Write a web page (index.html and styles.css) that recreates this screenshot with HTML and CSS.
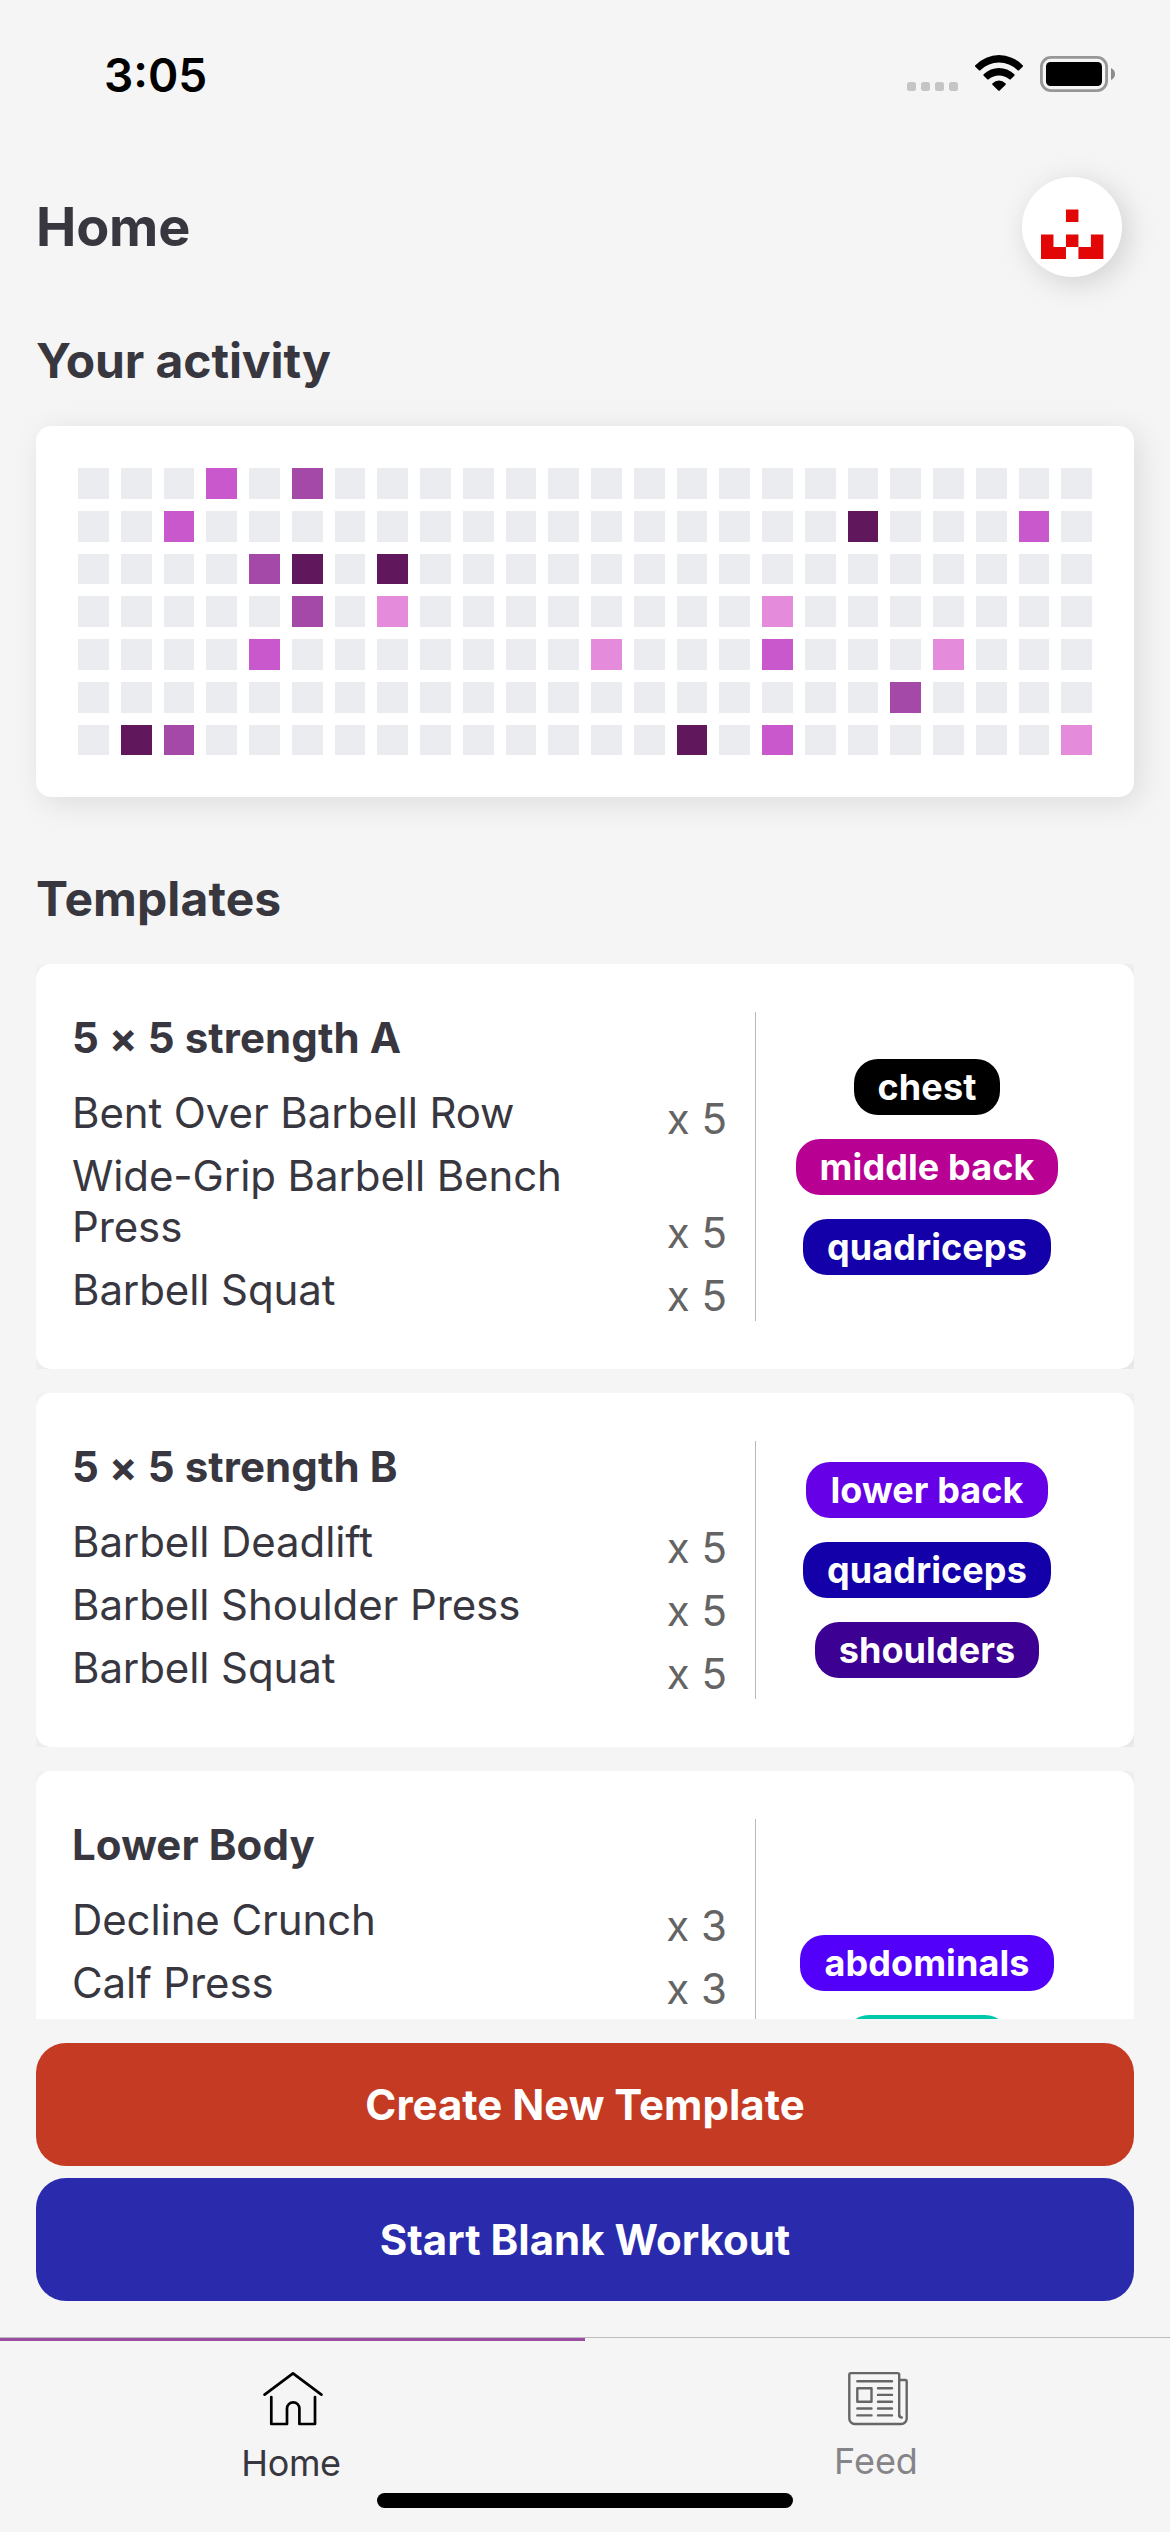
FILE: index.html
```html
<!DOCTYPE html>
<html lang="en">
<head>
<meta charset="utf-8">
<title>Home</title>
<link rel="stylesheet" href="styles.css">
</head>
<body>
<div class="status">
  <span class="time">3:05</span>
  <div class="status-icons">
    <div class="dots"><i></i><i></i><i></i><i></i></div>
    <svg class="wifi" width="48" height="36" viewBox="285 75 144 108">
      <path d="M287 105A97 97 0 0 1 427 105Q431 107 428 110L418 120Q415 123 412 120A79 79 0 0 0 302 120Q299 123 296 120L286 110Q283 107 287 105Z"/>
      <path d="M312 132A65 65 0 0 1 402 132Q406 134 403 137L393 147Q390 150 387 147A47 47 0 0 0 327 147Q324 150 321 147L311 137Q308 134 312 132Z"/>
      <path d="M338 160A26 26 0 0 1 376 160Q379 162 376 165L360 181Q357 184 354 181L338 165Q335 162 338 160Z"/>
    </svg>
    <svg class="battery" width="75" height="36" viewBox="0 0 75 36">
      <rect x="1.4" y="1.4" width="65.2" height="33.2" rx="9.5" fill="none" stroke="#969696" stroke-width="2.8"/>
      <rect x="6" y="6" width="56" height="24" rx="4.5"/>
      <path d="M71 12Q75 14 75 18T71 24Z" fill="#8c8c8c"/>
    </svg>
  </div>
</div>

<header class="header">
  <h1>Home</h1>
  <div class="avatar">
    <svg width="62.4" height="62.4" viewBox="0 0 5 5" fill="#e20606">
      <path d="M2 1h1v1H2zM0 3h1v1H0zM2 3h1v1H2zM4 3h1v1H4zM0 4h2v1H0zM3 4h2v1H3z"/>
    </svg>
  </div>
</header>

<h2>Your activity</h2>
<div class="activity" id="activity"></div>

<h2 class="templates-title">Templates</h2>
<main class="list">
  <div class="row">
    <article class="card">
      <div class="info">
        <h3>5 × 5 strength A</h3>
        <div class="exercise"><span class="name">Bent Over Barbell Row</span><span class="sets">x 5</span></div>
        <div class="exercise"><span class="name">Wide-Grip Barbell Bench Press</span><span class="sets">x 5</span></div>
        <div class="exercise"><span class="name">Barbell Squat</span><span class="sets">x 5</span></div>
      </div>
      <div class="tags">
        <span class="tag chest">chest</span>
        <span class="tag middle-back">middle back</span>
        <span class="tag quadriceps">quadriceps</span>
      </div>
    </article>
  </div>
  <div class="row">
    <article class="card">
      <div class="info">
        <h3>5 × 5 strength B</h3>
        <div class="exercise"><span class="name">Barbell Deadlift</span><span class="sets">x 5</span></div>
        <div class="exercise"><span class="name">Barbell Shoulder Press</span><span class="sets">x 5</span></div>
        <div class="exercise"><span class="name">Barbell Squat</span><span class="sets">x 5</span></div>
      </div>
      <div class="tags">
        <span class="tag lower-back">lower back</span>
        <span class="tag quadriceps">quadriceps</span>
        <span class="tag shoulders">shoulders</span>
      </div>
    </article>
  </div>
  <div class="row">
    <article class="card tall">
      <div class="info">
        <h3>Lower Body</h3>
        <div class="exercise"><span class="name">Decline Crunch</span><span class="sets">x 3</span></div>
        <div class="exercise"><span class="name">Calf Press</span><span class="sets">x 3</span></div>
      </div>
      <div class="tags">
        <span class="tag abdominals">abdominals</span>
        <span class="tag teal"></span>
      </div>
    </article>
  </div>
</main>

<div class="actions">
  <button class="btn create">Create New Template</button>
  <button class="btn start">Start Blank Workout</button>
</div>

<nav class="tabs">
  <a class="tab active">
    <svg width="60" height="56" viewBox="0 0 60 56" fill="none" stroke="#000" stroke-width="2.7" stroke-linecap="round" stroke-linejoin="round">
      <path d="M1.6 23.6L30 2.4L58.4 23.6"/>
      <path d="M8.3 26V53H24V37.500a6 6 0 0 1 12.400 0V53H52V26"/>
    </svg>
    <span>Home</span>
  </a>
  <a class="tab feed">
    <svg width="60" height="56" viewBox="0 0 60 56" fill="none" stroke="#666" stroke-width="2.400" stroke-linecap="round" stroke-linejoin="round">
      <path d="M52 45.500a1.700 1.700 0 0 1-.8-1.400V3.600a1.500 1.500 0 0 0-1.500-1.500H2.800a1.500 1.500 0 0 0-1.500 1.500V47.500a5.500 5.500 0 0 0 5.500 5.500H53.200a5.500 5.500 0 0 0 5.500-5.500V10.200a1.200 1.200 0 0 0-1.200-1.200H51.500"/>
      <path d="M51.200 44.500Q51.500 46.500 53.800 46.500"/>
      <path d="M9.300 10.300H44M30 17.200H44M30 23.900H44M30 30.800H44M30 37.500H44M30 44.400H44M9.300 37.500H23.500M9.300 44.400H23.500M9.300 17.200H23.500V30.800H9.300Z"/>
    </svg>
    <span>Feed</span>
  </a>
  <div class="home-indicator"></div>
</nav>
<script src="app.js"></script>
</body>
</html>
```
FILE: styles.css
```css
* { box-sizing: border-box; }
body {
  margin: 0;
  width: 1170px;
  height: 2532px;
  overflow: hidden;
  display: flex;
  flex-direction: column;
  background: #f5f5f5;
  color: #38373f;
  font-family: Inter, "Liberation Sans", sans-serif;
}
h1, h2, h3 { margin: 0; font-weight: 700; }
svg { display: block; }

.status {
  height: 141px;
  flex: none;
  padding: 0 55px 0 104px;
  display: flex;
  justify-content: space-between;
  align-items: flex-start;
  color: #000;
}
.time { margin-top: 46px; font-size: 46px; line-height: 58px; font-weight: 600; }
.status-icons { display: flex; align-items: flex-end; height: 36px; margin-top: 55px; }
.dots { display: flex; gap: 5px; }
.dots i { width: 9px; height: 9px; border-radius: 2.5px; background: #c5c5c5; }
.wifi { margin: 0 17px; }
.battery { margin-bottom: -1px; }

.header {
  flex: none;
  height: 100px;
  margin: 36px 48px 0 36px;
  display: flex;
  justify-content: space-between;
  align-items: center;
}
h1 { font-size: 54px; line-height: 66px; letter-spacing: -.2px; }
.avatar {
  width: 100px;
  height: 100px;
  border-radius: 50%;
  background: #fff;
  padding: 19.600px 0 0 19.300px;
  box-shadow: 6px 6px 30px rgba(0, 0, 0, .15);
}

h2 { flex: none; margin: 55px 36px 0; font-size: 48px; line-height: 58px; letter-spacing: -.1px; }
.templates-title { margin-top: 73px; letter-spacing: .1px; }

.activity {
  flex: none;
  height: 371px;
  margin: 36px 36px 0;
  padding: 42px;
  border-radius: 15px;
  background: #fff;
  box-shadow: 6px 6px 30px rgba(0, 0, 0, .1);
  display: grid;
  grid-template-columns: repeat(24, 30.75px);
  grid-auto-rows: 30.75px;
  gap: 12px;
}
.day { background: #ebecf0; }
.level-1 { background: #e48bdb; }
.level-2 { background: #c858cc; }
.level-3 { background: #a549a8; }
.level-4 { background: #61175c; }

.list {
  flex: none;
  height: 1055px;
  margin: 36px 36px 0;
  overflow: hidden;
  display: flex;
  flex-direction: column;
  gap: 24px;
}
.row { flex: none; overflow: hidden; }
.card {
  display: flex;
  padding: 48px 36px;
  border-radius: 15px;
  background: #fff;
  box-shadow: 6px 6px 30px rgba(0, 0, 0, .1);
}
.card.tall { height: 784px; }
.info {
  width: 684px;
  padding-right: 28px;
  border-right: 1px solid #b9b9b9;
  font-size: 42px;
  line-height: 51px;
}
h3 { margin-bottom: 18px; font-size: 42px; line-height: 51px; letter-spacing: .1px; }
.exercise { display: flex; justify-content: space-between; align-items: flex-end; }
.name { max-width: 540px; margin: 6px 0; letter-spacing: -.1px; }
.sets { color: #646464; }
.tags {
  flex: 1;
  display: flex;
  flex-direction: column;
  justify-content: center;
  align-items: center;
  gap: 24px;
}
.tall .tags { justify-content: flex-start; padding-top: 116px; }
.tag {
  height: 56px;
  padding: 6px 24px;
  border-radius: 24px;
  color: #fff;
  font-size: 36px;
  line-height: 44px;
  font-weight: 700;
  letter-spacing: .1px;
}
.chest { background: #000; }
.middle-back { background: #b80092; }
.quadriceps { background: #1400a8; }
.lower-back { background: #6600e6; }
.shoulders { background: #3c0092; }
.abdominals { background: #5200fa; }
.teal { width: 164px; background: #00c9ab; }

.actions {
  flex: none;
  padding: 24px 36px 36px;
  display: flex;
  flex-direction: column;
  gap: 12px;
}
.btn {
  height: 123px;
  border: 0;
  padding: 0;
  border-radius: 30px;
  color: #fff;
  font: 700 42px/51px Inter, "Liberation Sans", sans-serif;
}
.create { background: #c53a22; }
.start { background: #292bac; }

.tabs {
  position: relative;
  flex: 1;
  display: flex;
  border-top: 1px solid #bdbdbd;
}
.tab {
  flex: 1;
  display: flex;
  flex-direction: column;
  align-items: center;
  padding-top: 30px;
  border-top: 3px solid transparent;
  font-size: 36px;
  line-height: 44px;
}
.tab span { margin: 14px 3px 0 0; letter-spacing: -.4px; }
.active { border-color: #9d4da1; }
.feed { color: #858589; }
.feed span { margin-top: 12px; letter-spacing: 0; }
.home-indicator {
  position: absolute;
  left: 377px;
  bottom: 24px;
  width: 416px;
  height: 15px;
  border-radius: 8px;
  background: #000;
}
```
FILE: app.js
```js
// Activity levels by week day (rows) and week (columns); 0 is a rest day.
const activity = [
  "000203000000000000000000",
  "002000000000000000400020",
  "000034040000000000000000",
  "000003010000000010000000",
  "000020000000100020001000",
  "000000000000000000030000",
  "043000000000004020000001"
];
const grid = document.getElementById("activity");
for (const week of activity) {
  for (const level of week) {
    const day = document.createElement("div");
    day.className = level === "0" ? "day" : "day level-" + level;
    grid.append(day);
  }
}
```
